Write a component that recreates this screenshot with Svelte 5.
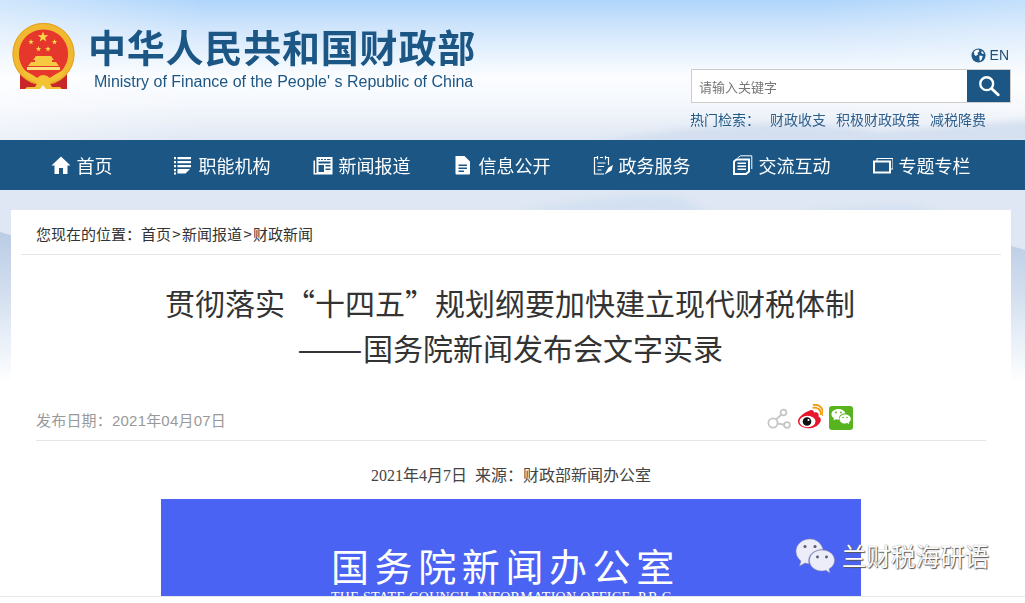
<script>
  const navItems = [
    { id: "home", label: "首页" },
    { id: "org", label: "职能机构" },
    { id: "news", label: "新闻报道" },
    { id: "info", label: "信息公开" },
    { id: "service", label: "政务服务" },
    { id: "talk", label: "交流互动" },
    { id: "topic", label: "专题专栏" },
  ];
  const hotWords = ["财政收支", "积极财政政策", "减税降费"];
  const crumbs = ["首页", "新闻报道", "财政新闻"];
  const emblemStars = [
    { x: 43, y: 37, s: 1.9 },
    { x: 31, y: 42, s: 1 },
    { x: 54.5, y: 42, s: 1 },
    { x: 38.5, y: 49, s: 1 },
    { x: 48, y: 49, s: 1 },
  ];
</script>

{#snippet navIcon(id)}
  <svg class="nav-icon" viewBox="0 0 20 20" width="20" height="20" aria-hidden="true">
    {#if id === "home"}
      <path fill="#fff" d="M10 1.500 19.500 10.500H16.500V19H12V13H8V19H3.500V10.500H.5Z" />
    {:else if id === "org"}
      <path fill="#fff" d="M1 2H3V4.200H1ZM4.500 2H18V4.200H4.500ZM1 6H3V8.200H1ZM4.500 6H18V8.200H4.500ZM1 10H3V12.200H1ZM4.500 10H18V12.200H4.500ZM1 14H3V16.200H1ZM4.500 14H17L12.500 18.500H4.500ZM1 17.500H3V19.500H1Z" />
    {:else if id === "news"}
      <path fill="#fff" fill-rule="evenodd" d="M3.500 2H19.500V19.500H.5V5.500H2V18H3.500ZM5.500 4V5H7V4ZM8 4V5H10V4ZM11 4V5H13V4ZM14 4V5H17.500V4ZM5.500 10V17H11V10ZM12.500 10V11.500H17.500V10ZM12.500 13.500V15H17.500V13.500Z" />
      <path fill="#1b5685" d="M5.500 6.500H17.500V8.500H5.500Z" />
    {:else if id === "info"}
      <path fill="#fff" fill-rule="evenodd" d="M2.500 1H11.500L17 6.500V18.500Q17 19.500 16 19.500H3.500Q2.500 19.500 2.500 18.500ZM5.500 9.500V11H14V9.500ZM5.500 12.500V14H14V12.500ZM5.500 15.500V17H11V15.500Z" />
    {:else if id === "service"}
      <g fill="none" stroke="#fff" stroke-width="1.200">
        <path d="M4.500 2.500H1.500V19H11M12.500 2.500H15.500V10" />
        <path d="M4.500 1V4.500M12.500 1V4.500M7 2.500H10M4.500 8H12.500M4.500 11.500H11M4.500 15H8.500" />
      </g>
      <path fill="#fff" d="M20 10 15.500 12.500 11.500 19.500 18.500 15.500Z" />
    {:else if id === "talk"}
      <g fill="none" stroke="#fff">
        <path stroke-width="1" d="M4.500 3 7.500 .8H18.800V14" />
        <path stroke-width="2" d="M3.500 4.500H16V16.500L13 19H1V6.500Z" />
      </g>
      <path fill="#fff" d="M4.500 7.500H13V9H4.500ZM4.500 10.500H13V12H4.500ZM4.500 13.500H13V15H4.500Z" />
    {:else}
      <g fill="none" stroke="#fff">
        <path stroke-width="1.100" d="M4 6V3.500H20V14H16.500" />
        <path stroke-width="2" d="M1 6.500H17V17.500H1Z" />
      </g>
    {/if}
  </svg>
{/snippet}

<div class="page">
  <svg class="backdrop" viewBox="0 0 1025 603" width="1025" height="603" preserveAspectRatio="none" aria-hidden="true">
    <defs>
      <linearGradient id="sky" x1="0" y1="0" x2="0" y2="1">
        <stop offset="0" stop-color="#afd5fb" />
        <stop offset=".22" stop-color="#d3e7fc" />
        <stop offset=".55" stop-color="#fbfdff" />
        <stop offset=".75" stop-color="#f4f7fc" />
        <stop offset="1" stop-color="#e0e8f4" />
      </linearGradient>
      <linearGradient id="ridge" x1="0" y1="0" x2="0" y2="1">
        <stop offset="0" stop-color="#a9bedd" />
        <stop offset=".55" stop-color="#d3dfef" />
        <stop offset="1" stop-color="#fdfeff" />
      </linearGradient>
      <linearGradient id="sides" x1="0" y1="0" x2="1" y2="0">
        <stop offset="0" stop-color="#fff" stop-opacity=".4" />
        <stop offset=".2" stop-color="#fff" stop-opacity="0" />
        <stop offset=".8" stop-color="#fff" stop-opacity="0" />
        <stop offset="1" stop-color="#fff" stop-opacity=".25" />
      </linearGradient>
      <filter id="soft"><feGaussianBlur stdDeviation="3" /></filter>
    </defs>
    <rect width="1025" height="140" fill="url(#sky)" />
    <rect width="1025" height="140" fill="url(#sides)" />
    <rect y="190" width="1025" height="190" fill="url(#ridge)" />
    <path fill="#dee7f3" d="M0 188H1025V250L985 238 960 225H60L20 238 0 232Z" />
    <g filter="url(#soft)">
      <path fill="#d2e0f1" d="M520 212Q620 192 680 198L710 214ZM800 214Q860 204 920 207L950 218 900 226Z" />
      <path fill="#cfdcee" opacity=".8" d="M600 142Q760 112 880 132L1030 120V142Z" />
    </g>
  </svg>

  <header class="top">
    <div class="brand">
      <svg class="emblem" viewBox="0 0 86 92" width="86" height="92" aria-hidden="true">
        <path fill="#c9262a" d="M20 71 33 78H54L67 71V89H53L49 84H38L34 89H20Z" />
        <circle cx="43.500" cy="54" r="27.800" fill="#e5372c" stroke="#f1b92f" stroke-width="6.400" />
        <circle cx="43.500" cy="54" r="30.600" fill="none" stroke="#dd9a1e" stroke-width=".8" />
        {#each emblemStars as star}
          <path fill="#f9d84a" transform="translate({star.x} {star.y}) scale({star.s * 2.900})" d="M0-1 .24-.31.95-.31.38.12.59.81 0 .4-.59.81-.38.12-.95-.31-.24-.31Z" />
        {/each}
        <path fill="#f6c93f" d="M36 56H51L54 60H52V62H56L59 66H28L31 62H35V60H33Z" />
        <path fill="#fbe27c" d="M27 67H60V70H27Z" />
        <path fill="#f4c335" d="M23 70Q32 74 37 78 43 72 50 78 55 74 64 70L62 76 55 80 49 82 52 87H60L62 89H46L43 85 40 89H25L27 87H35L38 82 32 80 25 76Z" />
      </svg>
      <div class="brand-text">
        <div class="brand-cn">中华人民共和国财政部</div>
        <div class="brand-en">Ministry of Finance of the People' s Republic of China</div>
      </div>
    </div>

    <div class="tools">
      <div class="lang">
        <svg viewBox="0 0 16 16" width="15" height="15" aria-hidden="true">
          <circle cx="8" cy="8" r="7.500" fill="#1f5a88" />
          <path fill="#fff" d="M3 4Q5 1.500 8 1.500L9 3.500 7 5 7.500 7 5 8.500 3.500 7ZM9 8 12.500 8.500 11.500 12 9.500 14 9 11ZM11.500 3 14 5.500 12.500 6.500 11 5Z" />
        </svg>
        <span>EN</span>
      </div>
      <div class="search">
        <input type="text" placeholder="请输入关键字" />
        <button type="button" aria-label="搜索">
          <svg viewBox="0 0 24 24" width="22" height="22" aria-hidden="true">
            <circle cx="9.500" cy="9.500" r="7" fill="none" stroke="#fff" stroke-width="2.600" />
            <path stroke="#fff" stroke-width="3.200" stroke-linecap="round" d="M15 15 22 21.500" />
          </svg>
        </button>
      </div>
      <div class="hot">
        <span class="hot-label">热门检索：</span>
        {#each hotWords as word}
          <a href="#top">{word}</a>
        {/each}
      </div>
    </div>
  </header>

  <nav class="main-nav">
    {#each navItems as item}
      <a class="nav-item" href="#top">
        {@render navIcon(item.id)}
        <span>{item.label}</span>
      </a>
    {/each}
  </nav>

  <main class="card">
    <div class="crumbs">
      您现在的位置：{#each crumbs as crumb, i}{#if i > 0}<span class="sep">&gt;</span>{/if}<a href="#top">{crumb}</a>{/each}
    </div>

    <article class="article">
      <h1>贯彻落实“十四五”规划纲要加快建立现代财税体制<br /><span class="dash">——</span>国务院新闻发布会文字实录</h1>

      <div class="meta">
        <span>发布日期：2021年04月07日</span>
        <div class="share">
          <svg viewBox="0 0 24 24" width="24" height="24" aria-hidden="true">
            <g fill="none" stroke="#c6c6c6" stroke-width="1.800">
              <circle cx="6" cy="17" r="4.600" />
              <circle cx="16.500" cy="6.500" r="2.900" />
              <circle cx="20" cy="19" r="2.900" />
              <path d="M9 13.500 14.500 8.500M10.600 17.500 17.200 18.600" />
            </g>
          </svg>
          <svg viewBox="0 0 26 26" width="26" height="26" aria-hidden="true">
            <path fill="#e6162d" d="M10.500 7.500C14 5 17 5.500 17 8.500 20 7.500 22.500 9.500 21.500 12.500 24 13.500 24.500 16 23 18.500 20.500 23 14 25 9 24 4 23 .8 20.500 1 17 1.200 13.500 6 9.500 10.500 7.500Z" />
            <ellipse cx="10.500" cy="17.500" rx="8" ry="5.700" fill="#fff" />
            <circle cx="10" cy="17.500" r="4.300" fill="#111" />
            <circle cx="11.500" cy="16" r="1.100" fill="#fff" />
            <g fill="none" stroke="#f39a0e" stroke-width="1.800">
              <path d="M15.500 4C20 2.500 24.500 6 24 11" />
              <path d="M16 1C22.500 -.5 27.500 5 25.800 12" />
            </g>
          </svg>
          <svg viewBox="0 0 24 24" width="24" height="24" aria-hidden="true">
            <rect width="24" height="24" rx="3" fill="#58b41e" />
            <path fill="#fff" d="M9.500 3C5.500 3 2.500 5.300 2.500 8.300 2.500 10 3.500 11.400 5 12.400L4.400 14.400 6.800 13.200C8 13.500 9 13.600 10.200 13.500 9.500 10 12 7.500 16.500 7.300 15.500 4.700 12.800 3 9.500 3Z" />
            <path fill="#fff" d="M16 8.500C12.800 8.500 10.500 10.500 10.500 13 10.500 15.500 12.800 17.500 16 17.500 16.800 17.500 17.500 17.300 18.200 17.100L20.300 18.300 19.700 16.400C21 15.500 21.800 14.300 21.800 13 21.800 10.500 19.200 8.500 16 8.500Z" />
            <g fill="#58b41e">
              <circle cx="7" cy="6.500" r=".9" />
              <circle cx="12" cy="6.500" r=".9" />
              <circle cx="14" cy="11.500" r=".8" />
              <circle cx="18" cy="11.500" r=".8" />
            </g>
          </svg>
        </div>
      </div>

      <p class="source">2021年4月7日&nbsp; 来源：财政部新闻办公室</p>

      <div class="banner">
        <div class="banner-cn">国务院新闻办公室</div>
        <div class="banner-en">THE STATE COUNCIL INFORMATION OFFICE, P.R.C.</div>
      </div>
    </article>
  </main>

  <div class="watermark">
    <svg viewBox="0 0 40 36" width="40" height="36" aria-hidden="true">
      <path fill="#ecedf8" stroke="#8d8fa6" stroke-width=".5" d="M15 1C7 1 1 6.500 1 13.500 1 17.500 3 20.500 6 23L4.500 28 10 25C11.500 25.500 12.500 25.700 14 25.700 12 18 18 11.500 28 11.500 26.500 5.500 21.500 1 15 1Z" />
      <path fill="#ecedf8" stroke="#8d8fa6" stroke-width=".5" d="M27 12C20 12 14.500 16.500 14.500 22.500 14.500 28.500 20 33 27 33 28.500 33 29.500 32.800 31 32.300L35 35 34 31C37.500 29 39.500 26 39.500 22.500 39.500 16.500 34 12 27 12Z" />
      <g fill="#555a72">
        <circle cx="10" cy="8.500" r="1.500" />
        <circle cx="20" cy="8.500" r="1.500" />
        <circle cx="22.500" cy="19" r="1.400" />
        <circle cx="31.500" cy="19" r="1.400" />
      </g>
    </svg>
    <span>兰财税海研语</span>
  </div>

  <div class="bottom-strip"></div>
</div>

<style>
  :global(body) {
    margin: 0;
    background: #fff;
  }

  .page {
    position: relative;
    width: 1025px;
    height: 603px;
    overflow: hidden;
    font-family: "Liberation Sans", "Noto Sans CJK SC", sans-serif;
    color: #333;
  }

  .backdrop {
    position: absolute;
    inset: 0;
  }

  .top {
    position: relative;
    height: 140px;
    display: flex;
    justify-content: space-between;
    padding-right: 14px;
    box-sizing: border-box;
  }

  .brand {
    display: flex;
    align-items: flex-start;
  }

  .emblem {
    display: block;
    flex: none;
  }

  .brand-text {
    padding-top: 22px;
    margin-left: 2px;
  }

  .brand-cn {
    font-family: "Noto Sans CJK SC", sans-serif;
    font-size: 38px;
    font-weight: 700;
    line-height: 48px;
    letter-spacing: 0.8px;
    color: #1b5685;
    white-space: nowrap;
  }

  .brand-en {
    margin: 2px 0 0 6px;
    font-size: 16px;
    line-height: 20px;
    color: #1b5685;
    white-space: nowrap;
  }

  .tools {
    width: 320px;
    padding-top: 46px;
    box-sizing: border-box;
  }

  .lang {
    display: flex;
    align-items: center;
    justify-content: flex-end;
    gap: 4px;
    height: 18px;
    padding-right: 2px;
    font-size: 14px;
    color: #1f4f78;
  }

  .search {
    display: flex;
    height: 34px;
    margin-top: 5px;
    border: 1px solid #ccc;
    box-sizing: border-box;
    background: #fff;
  }

  .search input {
    flex: 1;
    min-width: 0;
    padding: 0 7px;
    border: 0;
    outline: 0;
    background: transparent;
    font-family: "Noto Sans CJK SC", sans-serif;
    font-size: 13px;
  }

  .search input::placeholder {
    color: #777;
    opacity: 1;
  }

  .search button {
    width: 43px;
    padding: 0;
    border: 0;
    background: #1b5685;
    display: flex;
    align-items: center;
    justify-content: center;
  }

  .hot {
    display: flex;
    margin-top: 6px;
    font-family: "Noto Sans CJK SC", sans-serif;
    font-size: 14px;
    line-height: 20px;
    white-space: nowrap;
    margin-left: -1px;
  }

  .hot-label {
    width: 80px;
    color: #1f5a88;
  }

  .hot a {
    margin-right: 10px;
    color: #2f5f8c;
    text-decoration: none;
  }

  .main-nav {
    position: relative;
    display: flex;
    height: 50px;
    padding-left: 12px;
    background: #1b5685;
  }

  .nav-item {
    width: 140px;
    display: flex;
    align-items: center;
    justify-content: center;
    gap: 6px;
    padding-bottom: 1px;
    box-sizing: border-box;
    font-family: "Noto Sans CJK SC", sans-serif;
    font-size: 18px;
    color: #fff;
    text-decoration: none;
  }

  .nav-icon {
    display: block;
    flex: none;
    margin-left: -1px;
  }

  .card {
    position: relative;
    width: 1000px;
    margin: 20px 0 0 11px;
    background: #fff;
  }

  .crumbs {
    height: 44px;
    margin: 0 10px;
    padding-left: 15px;
    border-bottom: 1px solid #e5e5e5;
    font-family: "Noto Sans CJK SC", sans-serif;
    font-size: 15px;
    line-height: 47px;
    color: #333;
  }

  .crumbs a {
    color: inherit;
    text-decoration: none;
  }

  .sep {
    display: inline-block;
    width: 11px;
    text-align: center;
  }

  .article {
    padding: 0 25px;
  }

  h1 {
    margin: 25px 0 0;
    padding-right: 2px;
    font-family: "Noto Sans CJK SC", sans-serif;
    font-size: 30px;
    font-weight: 400;
    line-height: 45px;
    text-align: center;
    color: #333;
  }

  .dash {
    display: inline-block;
    width: 66px;
    text-align: center;
    transform: scaleX(1.3);
  }

  .meta {
    display: flex;
    align-items: flex-end;
    justify-content: space-between;
    height: 70px;
    padding-right: 133px;
    border-bottom: 1px solid #e5e5e5;
    font-family: "Liberation Sans", "Noto Sans CJK SC", sans-serif;
    font-size: 15px;
    color: #999;
  }

  .meta > span {
    line-height: 20px;
    padding-bottom: 9px;
    letter-spacing: 0.2px;
  }

  .share {
    display: flex;
    align-items: flex-end;
    gap: 6px;
    padding-bottom: 10px;
  }

  .share svg {
    display: block;
  }

  .source {
    margin: 0;
    padding: 25px 0 13px;
    font-family: "Liberation Serif", "Noto Sans CJK SC", serif;
    font-size: 16px;
    line-height: 20px;
    text-align: center;
    color: #444;
  }

  .banner {
    width: 700px;
    height: 200px;
    margin: 0 auto;
    padding: 41px 0 0 170px;
    box-sizing: border-box;
    background: #4b63f2;
    color: #fff;
  }

  .banner-cn {
    font-family: "Noto Sans CJK SC", sans-serif;
    font-size: 38px;
    line-height: 50px;
    letter-spacing: 5.6px;
    white-space: nowrap;
  }

  .banner-en {
    margin-top: 0;
    font-family: "Liberation Serif", serif;
    font-size: 14px;
    line-height: 16px;
    letter-spacing: 0.3px;
    white-space: nowrap;
  }

  .watermark {
    position: absolute;
    left: 795px;
    top: 538px;
    display: flex;
    align-items: center;
    gap: 7px;
    font-family: "Noto Sans CJK SC", sans-serif;
    font-size: 24.5px;
    line-height: 36px;
    color: #fff;
    text-shadow: 1px 1px 1px #555, 0 0 1px #666;
  }

  .bottom-strip {
    position: absolute;
    left: 0;
    right: 0;
    bottom: 0;
    height: 6px;
    border-top: 1px solid #e8e8e8;
    background: #fff;
  }
</style>
